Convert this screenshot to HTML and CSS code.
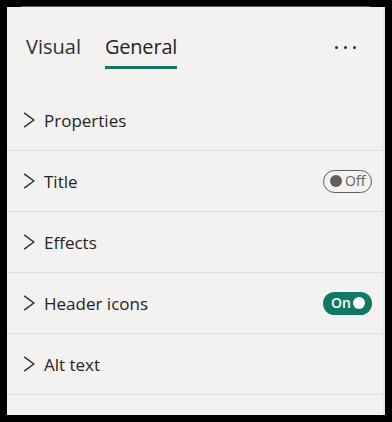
FILE: index.html
```html
<!DOCTYPE html>
<html lang="en">
<head>
<meta charset="utf-8">
<title>Format pane</title>
<link rel="stylesheet" href="styles.css">
</head>
<body>
<div class="topline"></div>
<div class="panel">
  <div class="header">
    <div class="tab">Visual</div>
    <div class="tab active">General<span class="bar"></span></div>
    <div class="more"><span></span><span></span><span></span></div>
  </div>
  <div class="row">
    <svg class="chev" viewBox="0 0 12 16" width="12" height="16"><path d="M1.2 0.8 L10.8 8 L1.2 15.2"/></svg>
    <span class="label">Properties</span>
  </div>
  <div class="row">
    <svg class="chev" viewBox="0 0 12 16" width="12" height="16"><path d="M1.2 0.8 L10.8 8 L1.2 15.2"/></svg>
    <span class="label">Title</span>
    <span class="toggle off"><span class="knob"></span><span class="ttext">Off</span></span>
  </div>
  <div class="row">
    <svg class="chev" viewBox="0 0 12 16" width="12" height="16"><path d="M1.2 0.8 L10.8 8 L1.2 15.2"/></svg>
    <span class="label">Effects</span>
  </div>
  <div class="row">
    <svg class="chev" viewBox="0 0 12 16" width="12" height="16"><path d="M1.2 0.8 L10.8 8 L1.2 15.2"/></svg>
    <span class="label">Header icons</span>
    <span class="toggle on"><span class="ttext">On</span><span class="knob"></span></span>
  </div>
  <div class="row">
    <svg class="chev" viewBox="0 0 12 16" width="12" height="16"><path d="M1.2 0.8 L10.8 8 L1.2 15.2"/></svg>
    <span class="label">Alt text</span>
  </div>
</div>
</body>
</html>
```
FILE: styles.css
```css
html, body {
  margin: 0;
  padding: 0;
  background: #000;
}
body {
  width: 392px;
  height: 422px;
  overflow: hidden;
  font-family: "Open Sans", "Noto Sans", sans-serif;
  color: #252423;
}
.topline {
  height: 1px;
  margin: 6px 22px 0 21px;
  background: #5c5b5a;
}
.panel {
  margin: 0 7px 7px 7px;
  height: 408px;
  background: #f3f2f1;
  box-sizing: border-box;
  border-right: 2px solid #e8e6e4;
  display: flex;
  flex-direction: column;
}
.header {
  height: 83px;
  box-sizing: border-box;
  padding: 26px 27px 0 19px;
  display: flex;
  align-items: flex-start;
  gap: 24px;
}
.tab {
  font-size: 20px;
  line-height: 28px;
  color: #323130;
  display: flex;
  flex-direction: column;
}
.tab.active {
  font-weight: 500;
  letter-spacing: -0.2px;
  color: #252423;
}
.bar {
  height: 3px;
  margin-top: 5px;
  background: #117865;
}
.more {
  margin-left: auto;
  height: 28px;
  display: flex;
  align-items: center;
  gap: 6px;
}
.more span {
  width: 3px;
  height: 3px;
  border-radius: 50%;
  background: #323130;
}
.row {
  height: 60px;
  border-bottom: 1px solid #e1dfdd;
  display: flex;
  align-items: center;
  padding: 0 11px 0 16px;
  flex-shrink: 0;
}
.chev {
  flex-shrink: 0;
}
.chev path {
  fill: none;
  stroke: #323130;
  stroke-width: 1.5;
}
.label {
  margin-left: 9px;
  font-size: 17px;
  font-weight: 500;
  color: #252423;
}
.toggle {
  margin-left: auto;
  width: 49px;
  height: 23px;
  box-sizing: border-box;
  border-radius: 12px;
  display: inline-flex;
  align-items: center;
  font-size: 14px;
}
.toggle .knob {
  width: 12px;
  height: 12px;
  border-radius: 50%;
  flex-shrink: 0;
}
.toggle.off {
  border: 1px solid #605e5c;
  padding-left: 6px;
  gap: 3px;
  color: #605e5c;
}
.toggle.off .knob {
  background: #605e5c;
}
.toggle.on {
  background: #117865;
  color: #fff;
  font-weight: 600;
  padding-left: 8px;
  gap: 2px;
}
.toggle.on .knob {
  background: #fff;
}
.ttext {
  line-height: 20px;
}
```
